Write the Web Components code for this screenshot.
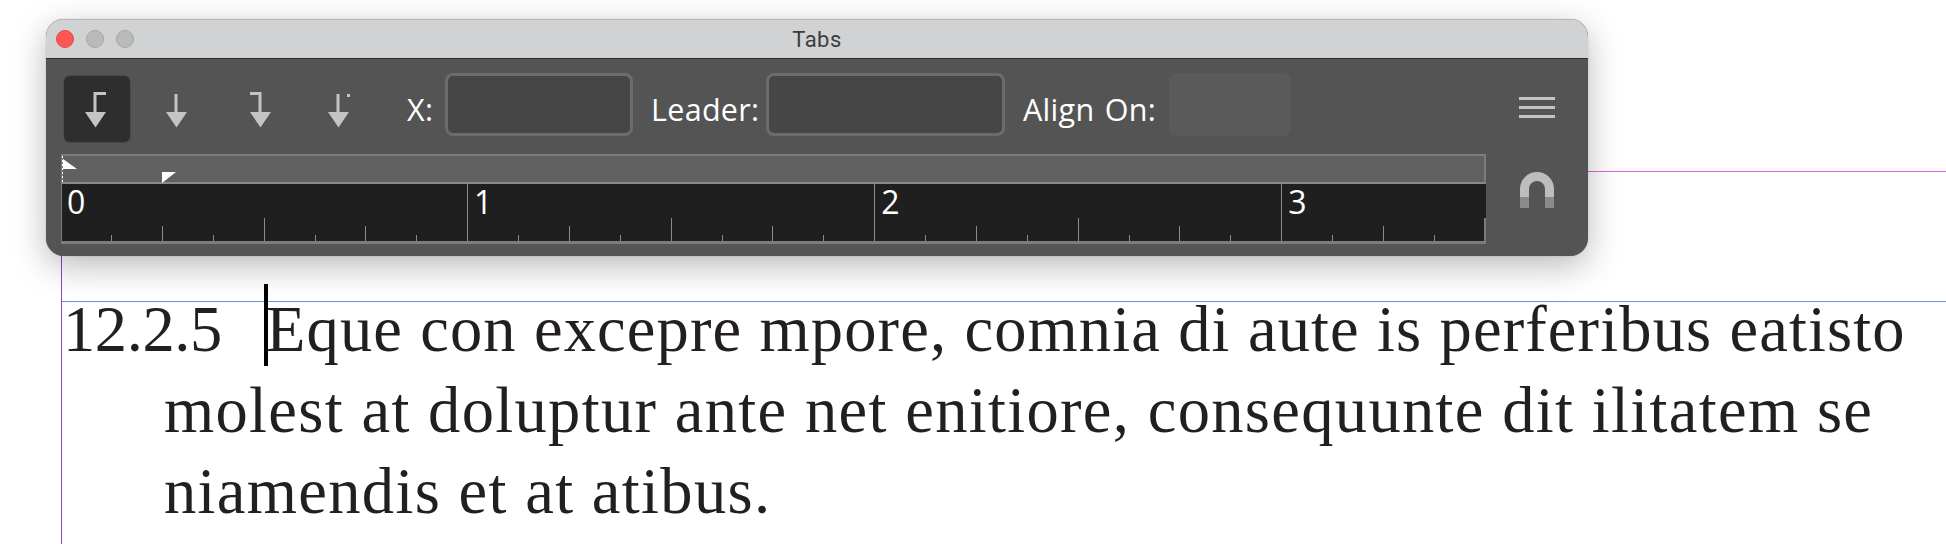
<!DOCTYPE html>
<html><head><meta charset="utf-8">
<style>
html,body{margin:0;padding:0;background:#fff;width:1946px;height:544px;overflow:hidden}
</style></head><body>
<doc-page>
  <text-frame>
    <text-line indent="0"><span slot="num">12.2.5</span>Eque con excepre mpore, comnia di aute is perferibus eatisto</text-line>
    <text-line indent="1">molest at doluptur ante net enitiore, consequunte dit ilitatem se</text-line>
    <text-line indent="1">niamendis et at atibus.</text-line>
  </text-frame>
  <tabs-window>
    <tab-button slot="tools" kind="left" cx="31.5" active></tab-button>
    <tab-button slot="tools" kind="center" cx="33.5"></tab-button>
    <tab-button slot="tools" kind="right" cx="38.5"></tab-button>
    <tab-button slot="tools" kind="decimal" cx="37.5"></tab-button>
    <labeled-field slot="fields" label="X:" width="188" lw="38" lead="34"></labeled-field>
    <labeled-field slot="fields" label="Leader:" width="239" lw="115" lead="18"></labeled-field>
    <labeled-field slot="fields" label="Align On:" width="122" lw="146" lead="18" disabled></labeled-field>
    <tab-ruler slot="ruler"></tab-ruler>
  </tabs-window>
</doc-page>
<script>
function tpl(html){const t=document.createElement('template');t.innerHTML=html;return t}
function def(name,html,extra){
  const t=tpl(html);
  customElements.define(name,class extends HTMLElement{
    constructor(){super();this.attachShadow({mode:'open'}).appendChild(t.content.cloneNode(true))}
    connectedCallback(){extra&&extra.call(this,this.shadowRoot)}
  });
}
def('doc-page',`<style>
:host{display:block;position:relative;width:1946px;height:544px;overflow:hidden;background:#fff}
.g{position:absolute;display:block}
.magenta{left:1588px;right:0;top:171px;height:1px;background:#e264dc}
.blue{left:61px;right:0;top:301px;height:1px;background:#5d9be8}
.purple{left:61px;top:200px;bottom:0;width:1px;background:#8a47cf}
</style>
<i class="g magenta"></i><i class="g blue"></i><i class="g purple"></i><slot></slot>`);

def('text-frame',`<style>
:host{display:block;padding:289px 0 0 63px;font-family:"Liberation Serif",serif;font-size:64.5px;color:#231f20;line-height:81px}
</style><slot></slot>`);

def('text-line',`<style>
:host{display:flex;height:81px;white-space:nowrap;position:relative}
.num{display:block;width:203px;letter-spacing:-.4px;flex:none}
:host([indent="1"]) .num{width:101px}
.caret{position:absolute;left:201px;top:-5px;width:4px;height:82px;background:#000}
:host([indent="1"]) .caret{display:none}
.txt{letter-spacing:1.12px}
:host([indent="1"]) .txt{letter-spacing:1.33px}
</style><span class="num"><slot name="num"></slot></span><i class="caret"></i><span class="txt"><slot></slot></span>`);

def('tabs-window',`<style>
:host{position:absolute;left:46px;top:19px;width:1542px;height:237px;border-radius:18px;display:flex;flex-direction:column;overflow:hidden;
 box-shadow:0 10px 34px rgba(0,0,0,.28),0 0 1px rgba(0,0,0,.4);font-family:"Open Sans",sans-serif;background:#545454}
.title{height:40px;box-sizing:border-box;background:#d1d2d4;border-top:1px solid #b9b9b9;border-bottom:1px solid #2c2c2c;display:flex;align-items:center;position:relative;flex:none}
.lights{display:flex;gap:12px;margin-left:10px}
.lights i{display:block;width:16px;height:16px;border-radius:50%;background:#b9babb;border:1px solid #a6a6a6}
.lights i:first-child{background:#fc5753;border-color:#e5474a}
.name{position:absolute;left:0;right:0;text-align:center;font:22px Roboto,sans-serif;color:#3d3d3d;letter-spacing:.45px}
.body{flex:1;display:flex;padding:0 0 0 15px;min-height:0}
.main{width:1425px;flex:none;display:flex;flex-direction:column}
.row{height:95px;flex:none;display:flex;align-items:flex-start;padding-top:14px;box-sizing:border-box}
.tools{display:flex;gap:13px;margin-left:3px;padding-top:3px}
.fields{display:flex;margin-left:6px}
.side{flex:1;display:flex;flex-direction:column;align-items:center;padding-top:38px;box-sizing:border-box}
.side svg{display:block}
.ham{margin-bottom:54px}
</style>
<div class="title"><div class="lights"><i></i><i></i><i></i></div><div class="name">Tabs</div></div>
<div class="body">
 <div class="main">
  <div class="row"><div class="tools"><slot name="tools"></slot></div><div class="fields"><slot name="fields"></slot></div></div>
  <slot name="ruler"></slot>
 </div>
 <div class="side">
  <svg class="ham" width="36" height="21" viewBox="0 0 36 21"><g fill="#c4c4c4"><rect width="36" height="3"/><rect y="9" width="36" height="3"/><rect y="18" width="36" height="3"/></g></svg>
  <svg width="34" height="36" viewBox="0 0 34 36"><path d="M0 25V17a17 17 0 0 1 34 0V25H25V17a8 8 0 0 0-16 0V25Z" fill="#bdbdbd"/><path d="M0 25H9V36H0ZM25 25H34V36H25Z" fill="#8a8a8a"/></svg>
 </div>
</div>`);

def('tab-button',`<style>
:host{display:block;width:66px;height:66px;border-radius:6px;flex:none}
:host([active]){background:#2e2e2e;box-shadow:0 0 0 1px #4a4a4a}
svg{display:block}
</style><svg width="66" height="66" viewBox="0 0 66 66"></svg>`,function(r){
 const k=this.getAttribute('kind'), x=+this.getAttribute('cx'), s=x-.5, c='#c4c4c4';
 const stem={
  left:`M${s} 40V17.5H${x+10.5}`,
  center:`M${s} 40V18`,
  right:`M${s} 40V17.5H${x-10.5}`,
  decimal:`M${s} 40V18`
 }[k];
 r.querySelector('svg').innerHTML=`<path d="${stem}" fill="none" stroke="${c}" stroke-width="3"/>`+
  (k==='decimal'?`<rect x="${x+8.5}" y="18" width="3" height="3" fill="${c}"/>`:'')+
  `<path d="M${x-10.5} 36H${x+10.5}L${x} 51.5Z" fill="${c}"/>`;
});

def('labeled-field',`<style>
:host{display:flex;align-items:flex-start;font:500 30.5px "Open Sans",sans-serif;color:#fff;letter-spacing:.3px;word-spacing:2px}
.l{line-height:63px;padding-top:5px;white-space:nowrap;display:block}
.box{height:63px;box-sizing:border-box;border:3px solid #6c6c6c;border-radius:8px;background:#464646;flex:none}
:host([disabled]) .box{border:none;background:#5a5a5a}
</style><span class="l"></span><div class="box"></div>`,function(r){
 const l=r.querySelector('.l');l.textContent=this.getAttribute('label');l.style.width=this.getAttribute('lw')+'px';
 r.querySelector('.box').style.width=this.getAttribute('width')+'px';
 this.style.marginLeft=this.getAttribute('lead')+'px';
});

def('tab-ruler',`<style>
:host{display:block;width:1425px;height:90px;box-sizing:border-box;position:relative}
.strip{height:30px;box-sizing:border-box;background:#606060;border:2px solid #7c7c7c;border-bottom:2px solid #8a8a8a;position:relative}
.mk{position:absolute;display:block;overflow:visible}
.scale{height:60px;box-sizing:border-box;background:#1f1f1f;border-bottom:3px solid #7c7c7c;display:flex;position:relative}
.scale::before{content:"";position:absolute;left:0;top:0;bottom:0;width:1px;background:#7c7c7c}
.scale::after{content:"";position:absolute;right:0;bottom:0;height:23px;width:2px;background:#7c7c7c}
ruler-inch{flex:none}
ruler-inch:first-child{margin-left:-1px}
</style>
<div class="strip">
 <svg class="mk" style="left:-1px;top:0" width="16" height="28" viewBox="0 0 16 28"><path d="M0.5 0V27" stroke="#fff" stroke-dasharray="2 2" fill="none"/><path d="M1 3L15 13H1Z" fill="#fff"/></svg>
 <svg class="mk" style="left:99px;top:16px" width="15" height="12" viewBox="0 0 15 12"><path d="M0 0H14L0 11Z" fill="#fff"/></svg>
</div>
<div class="scale"><ruler-inch>0</ruler-inch><ruler-inch>1</ruler-inch><ruler-inch>2</ruler-inch><ruler-inch partial style="width:204px">3</ruler-inch></div>`);

def('ruler-inch',`<style>
:host{display:block;width:407.1px;height:57px;position:relative;font:32px "Open Sans",sans-serif;color:#fff;line-height:1}
.n{padding:2px 0 0 7px;display:block;position:relative}
svg{position:absolute;left:0;top:0}
</style><svg width="204" height="57"></svg><span class="n"><slot></slot></span>`,function(r){
 const h=[57,6,15,6,23,6,15,6];let s='';
 const n=this.hasAttribute('partial')?4:8;
 const svg=r.querySelector('svg');
 svg.setAttribute('width',n===4?204:408);
 for(let i=0;i<n;i++){const x=Math.round(i*50.9); if(i===0&&this.textContent.trim()==='0')continue;
  s+=`<rect x="${x}" y="${57-h[i]}" width="1" height="${h[i]}" fill="#8c8c8c"/>`}
 svg.innerHTML=s;
});
</script>
</body></html>
